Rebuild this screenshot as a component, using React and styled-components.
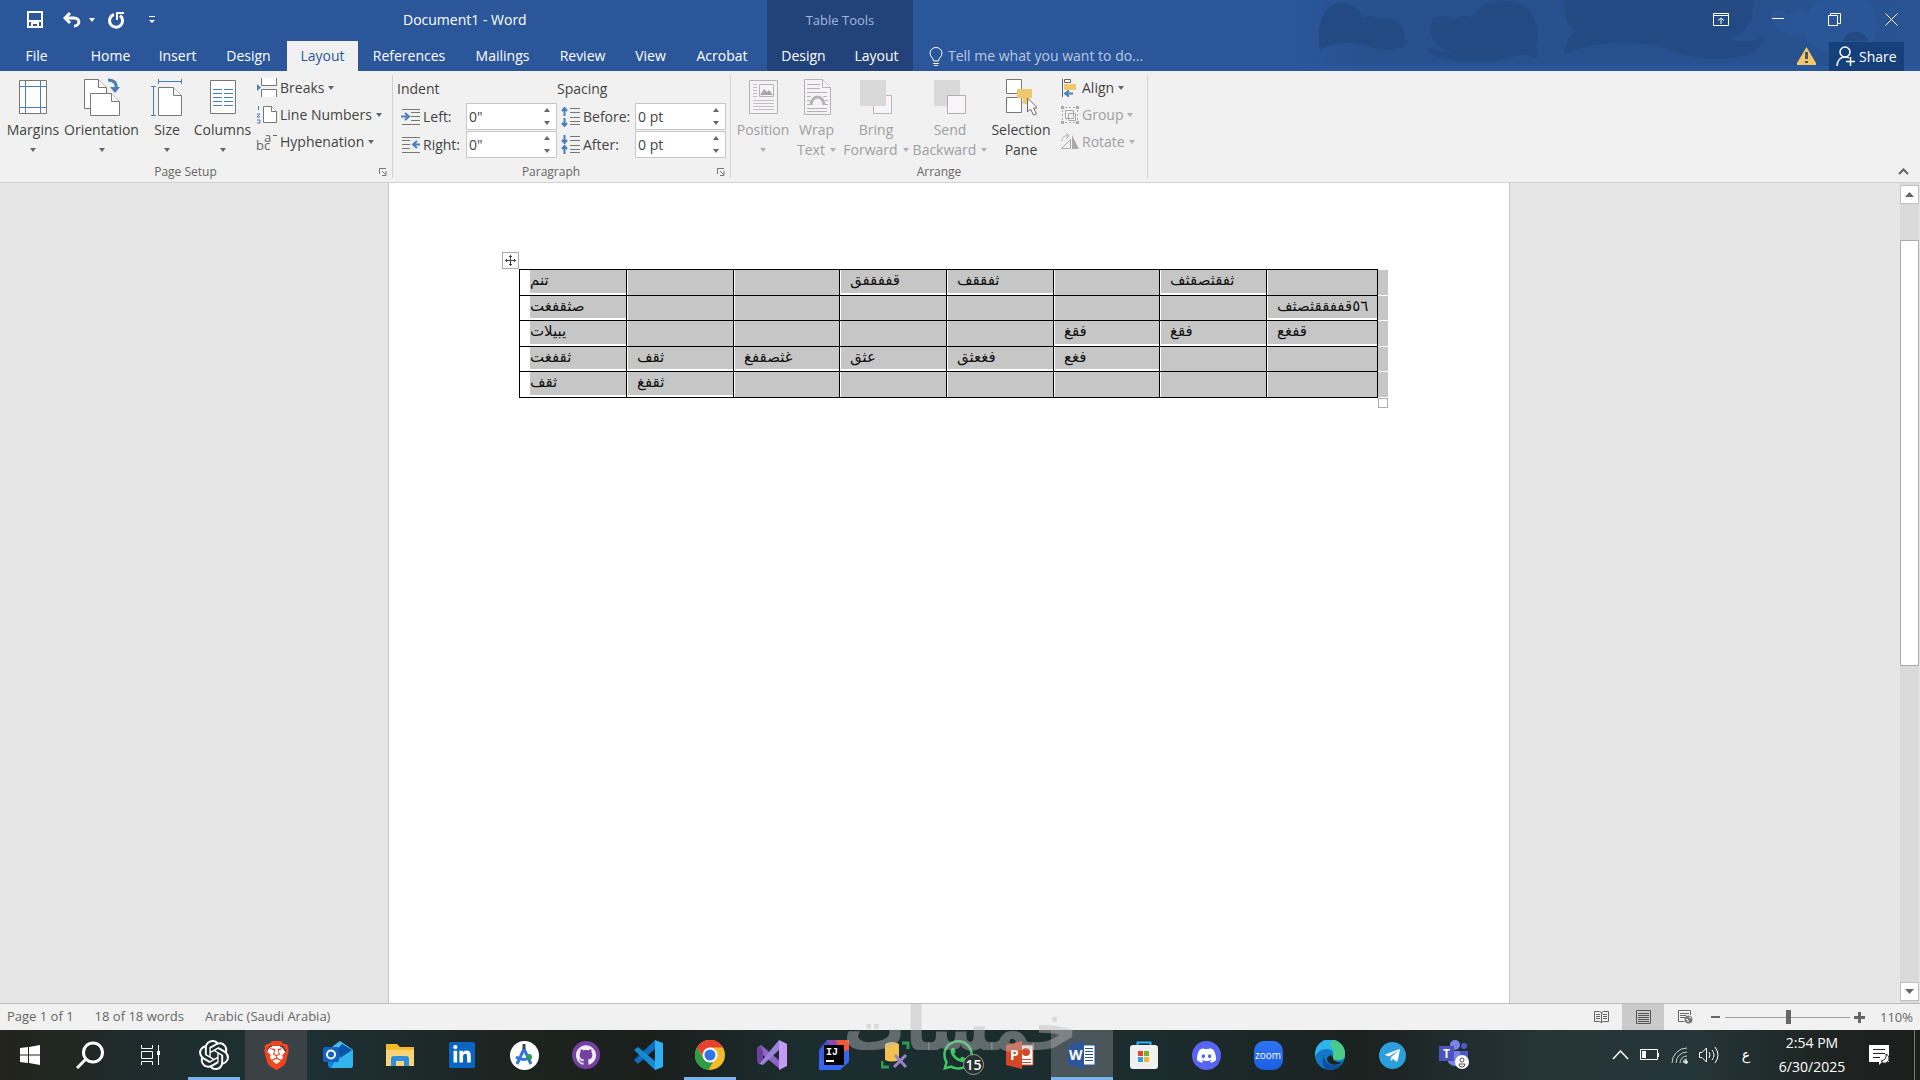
import styled, { createGlobalStyle } from "styled-components";
import { SiOpenai, SiBrave, SiGithub, SiDiscord, SiWhatsapp } from "react-icons/si";
import { FaTelegramPlane, FaLinkedinIn } from "react-icons/fa";

const GlobalStyle = createGlobalStyle`
    * {
      box-sizing: border-box;
    }

    body {
      margin: 0;
      font-family: "Open Sans", "Noto Sans", sans-serif;
      font-size: 14px;
      color: #444;
      background-color: #e6e6e6;
    }

    button, input {
      font: inherit;
      color: inherit;
      margin: 0;
    }

    button {
      border: none;
      padding: 0;
      background: transparent;
    }

    svg {
      display: block;
      flex: none;
    }
`;

const Window = styled.div`
    display: flex;
    flex-direction: column;
    min-height: 100vh;
    overflow: hidden;
`;

/* ---------- title bar and tabs ---------- */

const Header = styled.header`
    position: relative;
    background-color: #2b579a;
    color: #fff;
    display: flex;
    height: 71px;
`;

const HeaderArt = styled.svg`
    position: absolute;
    right: 0;
    top: 0;
`;

const HeaderLeft = styled.div`
    width: 767px;
    display: flex;
    flex-direction: column;
`;

const HeaderRight = styled.div`
    position: relative;
    flex: 1;
    display: flex;
    flex-direction: column;
    justify-content: space-between;
`;

const TitleRow = styled.div`
    height: 41px;
    display: flex;
    align-items: center;
    padding: 0 0 2px 27px;
`;

const QuickAccess = styled.div`
    display: flex;
    align-items: center;
    width: 376px;
    height: 38px;
`;

const QuickButton = styled.button`
    display: flex;
    align-items: center;
    margin-right: ${(props) => props.$after}px;
`;

const DocTitle = styled.h1`
    margin: 0;
    font-size: 14px;
    line-height: 38px;
    font-weight: 400;
    white-space: nowrap;
`;

const TabRow = styled.nav`
    display: flex;
    height: 30px;
`;

const Tab = styled.button`
    width: ${(props) => props.$width}px;
    margin-right: ${(props) => props.$after || 0}px;
    line-height: 30px;
    white-space: nowrap;
    color: ${(props) => (props.$active ? "#2b579a" : "#fff")};
    background-color: ${(props) => (props.$active ? "#f1f1f1" : "transparent")};
`;

const ContextGroup = styled.div`
    width: 146px;
    background-color: #22437a;
    display: flex;
    flex-direction: column;
    justify-content: space-between;
`;

const ContextTitle = styled.div`
    text-align: center;
    line-height: 41px;
    font-size: 13px;
    color: #a3b7da;
`;

const WindowControls = styled.div`
    display: flex;
    justify-content: flex-end;
    height: 38px;
`;

const WindowButton = styled.button`
    width: 57px;
    display: flex;
    align-items: center;
    justify-content: center;
`;

const CommandRow = styled.div`
    display: flex;
    align-items: center;
    height: 30px;
    padding: 0 16px;
`;

const TellMe = styled.input`
    flex: 1;
    margin-left: 5px;
    padding: 0 0 2px;
    border: none;
    outline: none;
    background: transparent;

    &::placeholder {
      color: #b8c8e4;
      opacity: 1;
    }
`;

const ShareButton = styled.button`
    display: flex;
    align-items: center;
    gap: 4px;
    margin-left: 13px;
    width: 75px;
    height: 29px;
    padding-left: 7px;
    background-color: #15407a;
    color: #fff;
`;

/* ---------- ribbon ---------- */

const Ribbon = styled.section`
    display: flex;
    height: 112px;
    background-color: #f1f1f1;
    border-bottom: 1px solid #d2d2d2;
    padding: 4px 11px 4px 0;
`;

const Group = styled.div`
    width: ${(props) => props.$width}px;
    border-right: 1px solid #d2d2d2;
    display: flex;
    flex-direction: column;
`;

const GroupBody = styled.div`
    display: flex;
    flex: 1;
    padding-left: ${(props) => props.$left || 0}px;
`;

const GroupFooter = styled.div`
    display: flex;
    align-items: center;
    height: 12px;
    line-height: 12px;
    font-size: 12px;
    color: #666;

    span {
      flex: 1;
      text-align: center;
    }

    button {
      margin: 0 5px 0 8px;
    }
`;

const BigButton = styled.button`
    width: ${(props) => props.$width}px;
    display: flex;
    flex-direction: column;
    align-items: center;
    padding-top: 3px;
    height: 87px;
    line-height: 20px;
    white-space: nowrap;
    color: ${(props) => (props.$disabled ? "#a0a0a0" : "#444")};

    > svg {
      margin-bottom: 4px;
    }
`;

const LabelLine = styled.span`
    display: flex;
    align-items: center;
    gap: 5px;
    min-height: 20px;
`;

const SmallColumn = styled.div`
    display: flex;
    flex-direction: column;
    margin-left: ${(props) => props.$left}px;
`;

const SmallButton = styled.button`
    display: flex;
    align-items: center;
    height: 27px;
    padding-bottom: 2px;
    white-space: nowrap;
    color: ${(props) => (props.$disabled ? "#a0a0a0" : "#444")};

    > span {
      margin: 0 4px 0 2px;
    }
`;

const FieldColumn = styled.div`
    display: flex;
    flex-direction: column;
    gap: 1px;
    width: ${(props) => props.$width}px;
`;

const FieldTitle = styled.div`
    line-height: 27px;
`;

const Field = styled.div`
    display: flex;
    align-items: center;
    height: 27px;
    padding-left: 4px;

    > svg {
      margin-right: 2px;
    }

    label {
      width: ${(props) => props.$label}px;
      white-space: nowrap;
    }
`;

const Spinner = styled.div`
    display: flex;
    width: 91px;
    height: 27px;
    border: 1px solid #c6c6c6;
    background-color: #fff;

    input {
      width: 70px;
      border: none;
      outline: none;
      padding: 0 2px;
      background: transparent;
    }
`;

const SpinnerArrows = styled.div`
    flex: 1;
    display: flex;
    flex-direction: column;

    button {
      flex: 1;
      display: flex;
      align-items: center;
      justify-content: center;
    }
`;

const CollapseButton = styled.button`
    margin-left: auto;
    align-self: flex-end;
    padding-bottom: 3px;
`;

/* ---------- document ---------- */

const Workspace = styled.main`
    flex: 1;
    display: flex;
    background-color: #e6e6e6;
`;

const Canvas = styled.div`
    flex: 1;
    display: flex;
    justify-content: center;
    padding-right: 2px;
`;

const Page = styled.article`
    width: 1122px;
    background-color: #fff;
    border: solid #c6c6c6;
    border-width: 0 1px;
    padding: 69px 0 0 113px;
`;

const TableFrame = styled.div`
    display: flex;
    flex-direction: column;
    width: 886px;
`;

const MoveHandle = styled.button`
    width: 17px;
    height: 17px;
    border: 1px solid #ababab;
    background-color: #fff;
    display: flex;
    align-items: center;
    justify-content: center;
`;

const ResizeHandle = styled.div`
    width: 10px;
    height: 10px;
    border: 1px solid #ababab;
    background-color: #fff;
    align-self: flex-end;
`;

const DocTable = styled.table`
    margin-left: 17px;
    border-spacing: 0;
    table-layout: fixed;
    width: 869px;

    tr:first-child td {
      border-top: 1px solid #000;
    }

    td:first-child {
      border-left: 1px solid #000;
      box-shadow: inset 10px 0 #fff, inset 0 -2px #fff;
    }
`;

const Row = styled.tr`
    height: ${(props) => props.$height}px;
`;

const Cell = styled.td`
    padding: 0 0 0 10px;
    border-right: 1px solid #000;
    border-bottom: 1px solid #000;
    background-color: #c6c6c6;
    box-shadow: inset 1px 0 #fff, inset 0 ${(props) => (props.$filled ? "-2px" : "0")} #fff;
    color: #111;
    font-family: "DejaVu Sans", sans-serif;
    font-size: 15px;
    line-height: 20px;
    vertical-align: top;
    white-space: nowrap;
`;

const RowMark = styled.td`
    padding: 0;
    background-color: #c6c6c6;
    border-bottom: 1px solid #fff;

    tr:first-child > && {
      border-top-color: #fff;
    }
`;

const ScrollBar = styled.div`
    display: flex;
    flex-direction: column;
    width: 19px;
    margin-right: 1px;
    padding: 2px 0;
    background-color: #dadada;
`;

const ScrollButton = styled.button`
    height: 19px;
    border: 1px solid #c0c0c0;
    background-color: #fff;
    display: flex;
    align-items: center;
    justify-content: center;
`;

const ScrollSpace = styled.div`
    flex: ${(props) => props.$grow};
`;

const ScrollThumb = styled.div`
    flex: 425;
    border: 1px solid #ababab;
    background-color: #fff;
`;

/* ---------- status bar ---------- */

const StatusBar = styled.footer`
    display: flex;
    align-items: center;
    height: 27px;
    padding: 0 7px;
    border-top: 1px solid #bdbdbd;
    background-color: #f1f1f1;
    color: #666;
    font-size: 13px;

    > span {
      line-height: 24px;
      padding-bottom: 2px;
      margin-right: 21px;
    }
`;

const ViewControls = styled.div`
    display: flex;
    align-items: center;
    margin-left: auto;
`;

const ViewButton = styled.button`
    width: 42px;
    height: 26px;
    display: flex;
    align-items: center;
    justify-content: center;
    background-color: ${(props) => (props.$active ? "#cacaca" : "transparent")};
`;

const ZoomSlider = styled.input`
    appearance: none;
    width: 125px;
    height: 15px;
    margin: 0 4px;
    background: linear-gradient(#a0a0a0, #a0a0a0) center / 100% 1px no-repeat;

    &::-webkit-slider-thumb {
      appearance: none;
      width: 5px;
      height: 14px;
      background-color: #666;
    }
`;

const ZoomValue = styled.output`
    width: 48px;
    text-align: right;
`;

/* ---------- taskbar ---------- */

const Taskbar = styled.nav`
    display: flex;
    height: 50px;
    color: #fff;
    background: linear-gradient(
      90deg,
      #23241b 0%,
      #1e2c2e 8%,
      #1e3034 16%,
      #1c2420 27%,
      #1a1f1c 34%,
      #1c2d30 42%,
      #1b2c2e 60%,
      #1b2220 71%,
      #253437 80%,
      #25363a 88%,
      #1e2423 95%,
      #1c1e1c 100%
    );
`;

const TaskButton = styled.button`
    position: relative;
    width: ${(props) => props.$width || 62}px;
    display: flex;
    align-items: center;
    justify-content: center;
    border: solid transparent;
    border-width: 0 ${(props) => (props.$active ? 0 : 5)}px;
    background: ${(props) =>
      props.$open ? "linear-gradient(#79b4ec, #79b4ec) bottom / 100% 3px no-repeat" : "none"};
    background-color: ${(props) => (props.$active ? props.$active : "transparent")};
    background-clip: padding-box;
`;

const Disc = styled.span`
    width: ${(props) => props.$size || 29}px;
    height: ${(props) => props.$size || 29}px;
    border-radius: ${(props) => props.$radius || "50%"};
    display: flex;
    align-items: center;
    justify-content: center;
    background: ${(props) => props.$fill};
    font-size: 10px;
    color: #fff;
`;

const Badge = styled.span`
    position: absolute;
    left: 31px;
    top: 24px;
    width: 21px;
    height: 21px;
    border: 1px solid #999;
    border-radius: 50%;
    background-color: #26312f;
    font-size: 14px;
    font-weight: 600;
    line-height: 19px;
`;

const Tray = styled.div`
    display: flex;
    align-items: center;
    margin-left: auto;
    padding-right: 5px;

    > svg {
      margin-right: 11px;
    }
`;

const Language = styled.span`
    width: 16px;
    margin: 0 16px 0 7px;
    font: 14px "DejaVu Sans", sans-serif;
    text-align: center;
`;

const Clock = styled.time`
    width: 84px;
    line-height: 24px;
    text-align: center;
    margin-right: 15px;
`;

const Notifications = styled.button`
    padding-right: 24px;
    height: 50px;
    border-right: 1px solid #777;
    display: flex;
    align-items: center;
`;

const Watermark = styled.div`
    position: absolute;
    left: 50%;
    bottom: 20px;
    width: 230px;
    margin-left: -112px;
    text-align: center;
    direction: rtl;
    pointer-events: none;
    font: bold 62px/62px "DejaVu Sans", sans-serif;
    color: rgba(186, 186, 186, 0.44);
`;

const Caret = ({ up, color = "#666", size = 6 }) => (
  <svg width={size} height={size === 6 ? 4 : 5} viewBox="0 0 6 4" preserveAspectRatio="none">
    <path d={up ? "M0 4h6L3 0z" : "M0 0h6L3 4z"} fill={color} />
  </svg>
);

const Launcher = () => (
  <svg width="8" height="8" viewBox="0 0 8 8" fill="none" stroke="#777">
    <path d="M.5 6V.5H7M3 3l3.500 3.500M7 3v4.500H3" />
  </svg>
);

const PageShape = ({ x, y, w = 23, h = 28, fold = 8, stroke = "#777", fill = "#fff" }) => (
  <g fill={fill} stroke={stroke}>
    <path d={`M${x} ${y}h${w - fold}l${fold} ${fold}v${h - fold}h-${w}z`} />
    <path d={`M${x + w - fold} ${y}v${fold}h${fold}`} />
  </g>
);

const bigIcons = {
  margins: (
    <svg width="36" height="38" fill="none">
      <path d="M4.500 2.500h27v33h-27z" fill="#fff" stroke="#777" />
      <path d="M10.500 3v32M25.500 3v32M5 8.500h26M5 29.500h26" stroke="#4a7ebb" />
    </svg>
  ),
  orientation: (
    <svg width="36" height="38" fill="none">
      <PageShape x={0.5} y={1.5} w={22} h={29} />
      <PageShape x={6.5} y={15.5} w={29} h={22} />
      <path d="M24 2c6 0 9 3 8 9" stroke="#4a7ebb" strokeWidth="3" />
      <path d="M26 9l5 6 5-6z" fill="#4a7ebb" />
    </svg>
  ),
  size: (
    <svg width="32" height="38" fill="none">
      <PageShape x={7.5} y={9.5} w={23} h={28} />
      <path d="M7.500 1v5M30.500 1v5M8 3.500h22M0 8.500h5M0 37.500h5M2.500 9v28" stroke="#4a7ebb" />
    </svg>
  ),
  columns: (
    <svg width="28" height="38" fill="none">
      <path d="M1.500 2.500h25v33h-25z" fill="#fff" stroke="#777" />
      <path d="M4 11.500h9M4 15.500h9M4 19.500h9M4 23.500h9M4 27.500h9M15 11.500h9M15 15.500h9M15 19.500h9M15 23.500h9M15 27.500h9" stroke="#4a7ebb" />
    </svg>
  ),
  position: (
    <svg width="30" height="38" fill="none">
      <path d="M1.500 2.500h28v33h-28z" fill="#f5f3f6" stroke="#b4b4b4" />
      <path d="M11.500 6.500h14v12h-14z" stroke="#b4b4b4" />
      <path d="M12 17l4-6 3 3 2-2 4 5z" fill="#a8a8a8" />
      <path d="M5 6.500h4M5 9.500h4M5 12.500h4M5 15.500h4M5 18.500h4M5 22.500h21M5 25.500h21M5 28.500h21M5 31.500h21" stroke="#c0c0c0" />
    </svg>
  ),
  wrap: (
    <svg width="28" height="38" fill="none">
      <PageShape x={1.5} y={1.5} w={26} h={35} stroke="#b4b4b4" fill="#f5f3f6" />
      <path d="M4 6.500h13M4 10.500h13M4 14.500h20M4 18.500h4M20 18.500h4M4 22.500h3M22 22.500h3M4 26.500h3M22 26.500h3M4 30.500h20M4 33.500h20" stroke="#b4b4b4" />
      <path d="M8 27a6.500 8 0 0 1 13 0" stroke="#b4b4b4" strokeWidth="3" />
    </svg>
  ),
  forward: (
    <svg width="34" height="38" fill="none">
      <path d="M14.500 17.500h18v18h-18z" fill="#f8f4f8" stroke="#b8b8b8" />
      <path d="M1 2h26v26H1z" fill="#d9d9d9" />
    </svg>
  ),
  backward: (
    <svg width="34" height="38" fill="none">
      <path d="M1 2h26v26H1z" fill="#d9d9d9" />
      <path d="M14.500 17.500h18v18h-18z" fill="#f8f4f8" stroke="#b0b0b0" />
    </svg>
  ),
  selection: (
    <svg width="32" height="38" fill="none">
      <path d="M1.500 1.500h15v14h-15zM1.500 19.500h15v15h-15z" fill="#fff" stroke="#777" />
      <path d="M12 11h15v9h-5v6h-4v-6h-6z" fill="#f0c76c" />
      <path d="M22.500 20v14l3-3 3 6 3-1-3-6h4z" fill="#fff" stroke="#666" />
    </svg>
  ),
};

const smallIcons = {
  breaks: (
    <svg width="22" height="20" fill="none" stroke="#777">
      <path d="M5.500 0v7.500h15V0M5.500 19v-7.500h15V19" fill="#fff" />
      <path d="M1 6v7l4-3.500z" fill="#4a7ebb" stroke="none" />
    </svg>
  ),
  lines: (
    <svg width="22" height="20" fill="none">
      <PageShape x={7.5} y={1.5} w={13} h={16} fold={5} />
      <path d="M2.500 1v4M1 9h3l-3 3h3M1 15h3v3H1" stroke="#4a7ebb" />
    </svg>
  ),
  hyphen: (
    <svg width="22" height="24" fontSize="13" fill="#666">
      <text x="0" y="20">bc</text>
      <text x="8" y="12">a</text>
      <path d="M17 5h4v1h-4z" />
    </svg>
  ),
  align: (
    <svg width="20" height="20" fill="none">
      <path d="M2.500 1v18" stroke="#666" />
      <path d="M4.500 1.500h6v3h-6z" fill="#fff" stroke="#666" />
      <path d="M4 6h12v6H4z" fill="#f0c76c" />
      <path d="M13 15.500H6M9 12.500l-4 3 4 3" stroke="#4a7ebb" strokeWidth="2" />
    </svg>
  ),
  group: (
    <svg width="20" height="20" fill="none" stroke="#aaa">
      <path d="M5.500 5.500h8v8h-8zM8.500 8.500h7v7h-7z" />
      <path d="M1 1h3v3H1zM16 1h3v3h-3zM1 16h3v3H1zM16 16h3v3h-3z" fill="#aaa" stroke="none" />
      <path d="M2.500 5v11M5 2.500h10M17.500 5v11M5 17.500h10" strokeDasharray="2 2" />
    </svg>
  ),
  rotate: (
    <svg width="20" height="20" fill="none" stroke="#aaa">
      <path d="M1.500 16.500h9v-9z" />
      <path d="M12 17V3l7 14z" fill="#aaa" stroke="none" />
      <path d="M2 9c0-4 3-6 6-5M6 1l3 3-3 3" />
    </svg>
  ),
};

const IndentIcon = ({ right }) => (
  <svg width="20" height="18" fill="none">
    <path
      d={right ? "M1 1.500h18M1 4.500h8M1 8.500h8M1 12.500h8M1 16.500h18" : "M1 1.500h18M10 4.500h9M10 8.500h9M10 12.500h9M1 16.500h18"}
      stroke="#777"
    />
    <path d={right ? "M19 8.500h-6M16 5l-4 3.500 4 3.500" : "M0 8.500h6M4 5l4 3.500L4 12"} stroke="#4a7ebb" strokeWidth="2" />
  </svg>
);

const SpacingIcon = ({ after }) => (
  <svg width="20" height="20" fill="none">
    <path d="M9 1.500h10M9 5.500h10M9 10.500h10M9 14.500h10M9 17.500h10" stroke="#777" />
    <path
      d={after ? "M3.500 0v7M1 5l2.500 3L6 5M3.500 19v-7M1 14l2.500-3L6 14" : "M3.500 9V2M1 4l2.500-3L6 4M3.500 11v7M1 16l2.500 3L6 16"}
      stroke="#4a7ebb"
      strokeWidth="2"
    />
  </svg>
);

const tabs = [
  { name: "File", width: 73, after: 3 },
  { name: "Home", width: 69 },
  { name: "Insert", width: 65 },
  { name: "Design", width: 77 },
  { name: "Layout", width: 71, active: true },
  { name: "References", width: 102 },
  { name: "Mailings", width: 85 },
  { name: "Review", width: 75 },
  { name: "View", width: 61 },
  { name: "Acrobat", width: 82 },
];

const rows = [
  { height: 27, cells: ["تنم", "", "", "قففقفق", "ثفققف", "", "ثفقثصقثف", ""] },
  { height: 25, cells: ["صثقفغت", "", "", "", "", "", "", "٥٦قففققثصثف"] },
  { height: 26, cells: ["يبيلات", "", "", "", "", "فقغ", "فقغ", "قفغع"] },
  { height: 25, cells: ["ثقفغت", "ثقف", "غثصقفغ", "عثق", "فغعثق", "فغع", "", ""] },
  { height: 26, cells: ["ثقف", "ثقفغ", "", "", "", "", "", ""] },
];

const Big = ({ icon, width, lines, caret, disabled }) => (
  <BigButton $width={width} $disabled={disabled}>
    {bigIcons[icon]}
    <LabelLine>{lines[0]}</LabelLine>
    <LabelLine>
      {lines[1]}
      {caret && <Caret color={disabled ? "#b0b0b0" : "#666"} />}
    </LabelLine>
  </BigButton>
);

const Small = ({ icon, label, disabled }) => (
  <SmallButton $disabled={disabled}>
    {smallIcons[icon]}
    <span>{label}</span>
    <Caret color={disabled ? "#b0b0b0" : "#666"} />
  </SmallButton>
);

const NumberField = ({ id, icon, label, labelWidth, value }) => (
  <Field $label={labelWidth}>
    {icon}
    <label htmlFor={id}>{label}</label>
    <Spinner>
      <input id={id} defaultValue={value} />
      <SpinnerArrows>
        <button aria-label="Increase"><Caret up /></button>
        <button aria-label="Decrease"><Caret /></button>
      </SpinnerArrows>
    </Spinner>
  </Field>
);

const TitleBar = () => (
  <Header>
    <HeaderArt width="640" height="71" fill="#244a83">
      <defs>
        <linearGradient id="haze">
          <stop offset="0" stopColor="#27508e" stopOpacity="0" />
          <stop offset="0.150" stopColor="#27508e" />
          <stop offset="0.750" stopColor="#27508e" />
          <stop offset="1" stopColor="#27508e" stopOpacity="0.500" />
        </linearGradient>
      </defs>
      <path d="M0 0h640v65H0z" fill="url(#haze)" />
      <path d="M490 12c8-6 16 0 18 4 6-8 16-10 20-2C530 4 540 0 550 0h36c14 14 14 40 0 50-20 12-60-2-62-16-18 4-34-8-34-22z" fill="#2b579a" opacity=".7" />
      <path d="M40 50c-2-14-2-26 4-36C52-2 78-2 82 18c6-4 14-2 16 2 20-4 30 8 26 18 0 4-4 6-8 6l12-4c-2 10-20 12-34 8-18-8-40-6-54 2z" />
      <path d="M148 48c12 6 22 4 28 4-22-2-28-16-24-32 6-6 18-4 22 0 4-4 14-6 18-2C196 6 212 0 228 1c24 2 34 24 28 46 2 6 1 10 1 13-8-6-14-6-22-4-20 10-84 8-87-8z" />
      <path d="M284 0h189c2 18-6 34-26 40 14 2 26 2 36-4 4 14-24 24-46 23-30 0-48-12-66-14-30-4-64-2-87 9 2-10 4-18 11-22-8-8-12-20-11-32z" />
      <path d="M563 41c4-12 20-12 26 0z" />
    </HeaderArt>
    <HeaderLeft>
      <TitleRow>
        <QuickAccess>
          <QuickButton aria-label="Save" $after={20}>
            <svg width="16" height="17" fill="none" stroke="#fff" strokeWidth="2">
              <path d="M1 1h14v15H1zM1 10h14" />
              <path d="M5 16v-4h6v4" />
            </svg>
          </QuickButton>
          <QuickButton aria-label="Undo" $after={8}>
            <svg width="18" height="16" fill="none" stroke="#fff" strokeWidth="3">
              <path d="M2 6h9c7 0 6 8 0 8" />
              <path d="M7 1L2 6l5 5" />
            </svg>
          </QuickButton>
          <QuickButton aria-label="Undo history" $after={13}><Caret color="#fff" /></QuickButton>
          <QuickButton aria-label="Repeat" $after={24}>
            <svg width="17" height="18" fill="none" stroke="#fff" strokeWidth="3">
              <path d="M6 3.500a6.500 6.500 0 1 0 6 1" />
              <path d="M9 9V2h7" strokeWidth="2" />
            </svg>
          </QuickButton>
          <QuickButton aria-label="Customize Quick Access Toolbar" $after={0}>
            <svg width="6" height="8" fill="#fff"><path d="M0 0h6v1H0zM0 4h6L3 7z" /></svg>
          </QuickButton>
        </QuickAccess>
        <DocTitle>Document1 - Word</DocTitle>
      </TitleRow>
      <TabRow>
        {tabs.map((tab) => (
          <Tab key={tab.name} $width={tab.width} $after={tab.after} $active={tab.active}>
            {tab.name}
          </Tab>
        ))}
      </TabRow>
    </HeaderLeft>
    <ContextGroup>
      <ContextTitle>Table Tools</ContextTitle>
      <TabRow>
        <Tab $width={73}>Design</Tab>
        <Tab $width={73}>Layout</Tab>
      </TabRow>
    </ContextGroup>
    <HeaderRight>
      <WindowControls>
        <WindowButton aria-label="Ribbon display options">
          <svg width="16" height="13" fill="none" stroke="#fff">
            <path d="M.5.5h15v12H.5zM1 2.500h14M8 11V5M5 7.500L8 5l3 2.500" />
          </svg>
        </WindowButton>
        <WindowButton aria-label="Minimize">
          <svg width="12" height="2" fill="#fff"><path d="M0 0h12v1H0z" /></svg>
        </WindowButton>
        <WindowButton aria-label="Restore">
          <svg width="13" height="13" fill="none" stroke="#fff">
            <path d="M.5 2.500h9v10h-9zM2.500 2V.5h10v10H10" />
          </svg>
        </WindowButton>
        <WindowButton aria-label="Close">
          <svg width="13" height="13" fill="none" stroke="#fff"><path d="M.5.5l12 12M12.500.5l-12 12" /></svg>
        </WindowButton>
      </WindowControls>
      <CommandRow>
        <svg width="14" height="19" fill="none" stroke="#fff">
          <path d="M4.500 14c0-3-3.500-4-3.500-8a6 5.500 0 0 1 12 0c0 4-3.500 5-3.500 8zM4 16.500h6M5 18.500h4" />
        </svg>
        <TellMe aria-label="Tell me" placeholder="Tell me what you want to do..." />
        <svg width="19" height="18">
          <path d="M9.500 0L19 16v2H0v-2z" fill="#f0c76c" />
          <path d="M8 5h3v7H8zM8 14h3v2H8z" fill="#555" />
        </svg>
        <ShareButton>
          <svg width="19" height="21" fill="none" stroke="#fff" strokeWidth="1.500">
            <circle cx="9" cy="6" r="5" />
            <path d="M1 20c0-6 4-9 8-9 2 0 3 0 4 1M14.500 11v9M10 15.500h9" />
          </svg>
          Share
        </ShareButton>
      </CommandRow>
    </HeaderRight>
  </Header>
);

const RibbonBar = () => (
  <Ribbon>
    <Group $width={393}>
      <GroupBody $left={4}>
        <Big icon="margins" width={58} lines={["Margins"]} caret />
        <Big icon="orientation" width={79} lines={["Orientation"]} caret />
        <Big icon="size" width={52} lines={["Size"]} caret />
        <Big icon="columns" width={59} lines={["Columns"]} caret />
        <SmallColumn $left={4}>
          <Small icon="breaks" label="Breaks" />
          <Small icon="lines" label="Line Numbers" />
          <Small icon="hyphen" label="Hyphenation" />
        </SmallColumn>
      </GroupBody>
      <GroupFooter>
        <span>Page Setup</span>
        <button aria-label="Page Setup dialog"><Launcher /></button>
      </GroupFooter>
    </Group>
    <Group $width={338}>
      <GroupBody $left={4}>
        <FieldColumn $width={160}>
          <FieldTitle>Indent</FieldTitle>
          <NumberField id="indent-left" icon={<IndentIcon />} label="Left:" labelWidth={43} value={'0"'} />
          <NumberField id="indent-right" icon={<IndentIcon right />} label="Right:" labelWidth={43} value={'0"'} />
        </FieldColumn>
        <FieldColumn $width={170}>
          <FieldTitle>Spacing</FieldTitle>
          <NumberField id="space-before" icon={<SpacingIcon />} label="Before:" labelWidth={52} value="0 pt" />
          <NumberField id="space-after" icon={<SpacingIcon after />} label="After:" labelWidth={52} value="0 pt" />
        </FieldColumn>
      </GroupBody>
      <GroupFooter>
        <span>Paragraph</span>
        <button aria-label="Paragraph dialog"><Launcher /></button>
      </GroupFooter>
    </Group>
    <Group $width={417}>
      <GroupBody>
        <Big icon="position" width={64} lines={["Position"]} caret disabled />
        <Big icon="wrap" width={43} lines={["Wrap", "Text"]} caret disabled />
        <Big icon="forward" width={76} lines={["Bring", "Forward"]} caret disabled />
        <Big icon="backward" width={72} lines={["Send", "Backward"]} caret disabled />
        <Big icon="selection" width={70} lines={["Selection", "Pane"]} />
        <SmallColumn $left={4}>
          <Small icon="align" label="Align" />
          <Small icon="group" label="Group" disabled />
          <Small icon="rotate" label="Rotate" disabled />
        </SmallColumn>
      </GroupBody>
      <GroupFooter>
        <span>Arrange</span>
      </GroupFooter>
    </Group>
    <CollapseButton aria-label="Collapse the ribbon">
      <svg width="11" height="7" fill="none" stroke="#666" strokeWidth="2"><path d="M1 6l4.500-4.500L10 6" /></svg>
    </CollapseButton>
  </Ribbon>
);

const DocumentArea = () => (
  <Workspace>
    <Canvas>
      <Page>
        <TableFrame>
          <MoveHandle aria-label="Move table">
            <svg width="11" height="11" fill="none" stroke="#444">
              <path d="M5.500 0v11M0 5.500h11M4 1.500h3M4 9.500h3M1.500 4v3M9.500 4v3" />
            </svg>
          </MoveHandle>
          <DocTable>
            <colgroup>
              {[108, 107, 106, 107, 107, 106, 107, 111, 10].map((width, i) => (
                <col key={i} width={width} />
              ))}
            </colgroup>
            <tbody>
              {rows.map((row, i) => (
                <Row key={i} $height={row.height}>
                  {row.cells.map((text, j) => (
                    <Cell key={j} $filled={text !== ""}>{text}</Cell>
                  ))}
                  <RowMark />
                </Row>
              ))}
            </tbody>
          </DocTable>
          <ResizeHandle />
        </TableFrame>
      </Page>
    </Canvas>
    <ScrollBar>
      <ScrollButton aria-label="Scroll up"><Caret up size={9} /></ScrollButton>
      <ScrollSpace $grow={36} />
      <ScrollThumb />
      <ScrollSpace $grow={317} />
      <ScrollButton aria-label="Scroll down"><Caret size={9} /></ScrollButton>
    </ScrollBar>
  </Workspace>
);

const Status = () => (
  <StatusBar>
    <span>Page 1 of 1</span>
    <span>18 of 18 words</span>
    <span>Arabic (Saudi Arabia)</span>
    <ViewControls>
      <ViewButton aria-label="Read mode">
        <svg width="15" height="14" fill="none" stroke="#666">
          <path d="M.5 1.500h5l2 1 2-1h5v10h-5l-2 1-2-1h-5zM7.500 2v11M2 4.500h4M2 6.500h4M2 8.500h4M9 4.500h4M9 6.500h4M9 8.500h4" />
        </svg>
      </ViewButton>
      <ViewButton $active aria-label="Print layout">
        <svg width="15" height="14" fill="none" stroke="#555">
          <path d="M.5.5h14v13H.5zM2 3.500h11M2 5.500h11M2 7.500h11M2 9.500h11M2 11.500h11" />
        </svg>
      </ViewButton>
      <ViewButton aria-label="Web layout">
        <svg width="15" height="14" fill="none" stroke="#666">
          <path d="M6 11.500H.5V.5h12V5M2 3.500h9M2 5.500h6M2 7.500h5" />
          <circle cx="10.500" cy="9.500" r="4" fill="#777" stroke="none" />
          <path d="M8 9l2 1v2M11 7l2 1" stroke="#fff" />
        </svg>
      </ViewButton>
      <svg width="15" height="10" fill="#666"><path d="M5 4h9v2H5z" /></svg>
      <ZoomSlider type="range" min="10" max="210" defaultValue="112" aria-label="Zoom" />
      <svg width="11" height="11" fill="#666"><path d="M0 4h11v3H0zM4 0h3v11H4z" /></svg>
      <ZoomValue>110%</ZoomValue>
    </ViewControls>
  </StatusBar>
);

const apps = [
  {
    name: "Start",
    width: 60,
    icon: (
      <svg width="20" height="20" fill="#fff">
        <path d="M0 3l8-1v7.500H0zM9 2l11-2v9.500H9zM0 10.500h8V18l-8-1zM9 10.500h11V20L9 18z" />
      </svg>
    ),
  },
  {
    name: "Search",
    width: 60,
    icon: (
      <svg width="28" height="28" fill="none" stroke="#fff" strokeWidth="3">
        <circle cx="17" cy="11.500" r="9.500" />
        <path d="M10 18l-9 9" />
      </svg>
    ),
  },
  {
    name: "Task View",
    width: 63,
    icon: (
      <svg width="23" height="20" fill="none" stroke="#fff">
        <path d="M1.500 0v3.500h11V0M1.500 20v-3.500h11V20M1.500 6.500h11v7h-11zM18.500 0v20" />
        <path d="M17 6h3v4h-3z" fill="#fff" stroke="none" />
      </svg>
    ),
  },
  { name: "ChatGPT", open: true, icon: <SiOpenai size={30} /> },
  {
    name: "Brave",
    active: "#3a4246",
    icon: <Disc $size={26} $fill="radial-gradient(#fff 50%, transparent 52%)"><SiBrave size={29} color="#f1451f" /></Disc>,
  },
  {
    name: "Outlook",
    icon: (
      <svg width="30" height="28">
        <path d="M5 9L17 0l13 9v15q0 3-3 3H8q-3 0-3-3z" fill="#1482d8" />
        <path d="M9 6l8-6 13 9-13 8z" fill="#4bb8f0" />
        <path d="M12 20L30 9v15q0 3-3 3H8z" fill="#31b4ee" />
        <path d="M13 10l6-7 10 6-12 8z" fill="#0b55a5" />
        <rect y="6" width="16" height="15" rx="2" fill="#0f62bd" />
        <circle cx="8" cy="13.500" r="4" fill="none" stroke="#fff" strokeWidth="2" />
      </svg>
    ),
  },
  {
    name: "File Explorer",
    icon: (
      <svg width="28" height="24">
        <path d="M0 1h11l3 3h14v19H0z" fill="#f5b92c" />
        <path d="M0 7h28v16H0z" fill="#f8d377" />
        <path d="M5 23v-7q0-3 3-3h12q3 0 3 3v7h-5v-5h-8v5z" fill="#2f8fdc" />
      </svg>
    ),
  },
  { name: "LinkedIn", icon: <Disc $size={26} $radius="2px" $fill="#0a66c2"><FaLinkedinIn size={20} /></Disc> },
  {
    name: "Android Studio",
    icon: (
      <Disc $fill="#fff">
        <svg width="20" height="24" fill="none" stroke="#3072e8" strokeWidth="3">
          <path d="M3 21L10 6l7 15M2 14q8 5 15 0" />
          <circle cx="15" cy="14" r="3" fill="#2f9c55" stroke="none" />
          <path d="M10 1v5" stroke="#444" />
        </svg>
      </Disc>
    ),
  },
  { name: "GitHub Desktop", icon: <Disc $size={28} $fill="#7540a0"><SiGithub size={20} color="#f0ecf8" /></Disc> },
  {
    name: "Visual Studio Code",
    icon: (
      <svg width="30" height="30">
        <path d="M1 20L22 0v9L5 24z" fill="#0f6bbd" />
        <path d="M1 10l4-3 17 14v9z" fill="#1688d4" />
        <path d="M22 0l8 3v24l-8 3z" fill="#2fb0f0" />
      </svg>
    ),
  },
  {
    name: "Chrome",
    open: true,
    icon: (
      <svg width="30" height="30">
        <circle cx="15" cy="15" r="15" fill="#f3bb2c" />
        <path d="M2 7.500A15 15 0 0 1 28 7.500H15L9 18z" fill="#e8422f" />
        <path d="M2 7.500L9 19l9 3-4.500 8A15 15 0 0 1 2 7.500z" fill="#2f9c48" />
        <circle cx="15" cy="15" r="7.500" fill="#fff" />
        <circle cx="15" cy="15" r="5.500" fill="#2f74e8" />
      </svg>
    ),
  },
  {
    name: "Visual Studio",
    icon: (
      <svg width="30" height="30">
        <path d="M0 8l4-3 20 17v8L0 10z" fill="#8a65c4" />
        <path d="M0 8l4-2 2 6v7l-4 5-2-2z" fill="#6e3f9d" />
        <path d="M2 24L22 0v10L6 25z" fill="#9a82d8" />
        <path d="M22 0l8 4v22l-8 4z" fill="#c69af4" />
      </svg>
    ),
  },
  {
    name: "IntelliJ IDEA",
    icon: (
      <svg width="30" height="30">
        <path d="M0 10L8 0h14L8 29H0z" fill="#3b5be0" />
        <path d="M8 0h22v12L18 20z" fill="#8c4ab0" />
        <path d="M17 0h13v10l-8 4z" fill="#ee5a38" />
        <path d="M30 10v12l-9 8H0V20z" fill="#3468ee" />
        <path d="M5 5h20v20H5z" fill="#000" />
        <text x="7" y="15" fill="#fff" fontSize="10" fontWeight="700" fontFamily="Liberation Mono, monospace">IJ</text>
        <path d="M7 20h8v2H7z" fill="#fff" />
      </svg>
    ),
  },
  {
    name: "SQL Server Tools",
    icon: (
      <svg width="30" height="28" fill="none">
        <path d="M4 3q7-4 14 0v16q-7 3-14 0z" fill="#f2c14e" />
        <path d="M21 2h6v6M1 20v6h7" stroke="#2f9c55" strokeWidth="3" />
        <path d="M14 14l11 12M25 14L13 26" stroke="#9a82c8" strokeWidth="3" />
      </svg>
    ),
  },
  { name: "WhatsApp", icon: <><SiWhatsapp size={30} color="#3cc760" /><Badge>15</Badge></> },
  {
    name: "PowerPoint",
    icon: (
      <svg width="28" height="28">
        <path d="M12 4h15v20H12z" fill="#fff" stroke="#d34727" />
        <circle cx="20" cy="11" r="4" fill="#d34727" />
        <path d="M16 18h9v1h-9zM16 21h9v1h-9z" fill="#d34727" />
        <path d="M0 4l16-4v28L0 24z" fill="#d34727" />
        <text x="4" y="19" fill="#fff" fontSize="14" fontWeight="700">P</text>
      </svg>
    ),
  },
  {
    name: "Word",
    open: true,
    active: "#4b565b",
    icon: (
      <svg width="28" height="28">
        <path d="M12 4h15v20H12z" fill="#fff" stroke="#2b579a" />
        <path d="M17 7h8v1h-8zM17 10h8v1h-8zM17 13h8v1h-8zM17 16h8v1h-8zM17 19h8v1h-8z" fill="#2b579a" />
        <path d="M0 4l16-4v28L0 24z" fill="#2b579a" />
        <text x="1" y="19" fill="#fff" fontSize="14" fontWeight="700">W</text>
      </svg>
    ),
  },
  {
    name: "Microsoft Store",
    icon: (
      <svg width="30" height="30">
        <path d="M8.500 7V2.500h13V7" fill="none" stroke="#31b4ee" strokeWidth="2" />
        <rect x="1" y="5" width="28" height="24" rx="3" fill="#f0f0f0" />
        <path d="M9 11h5v5H9z" fill="#e8422f" />
        <path d="M15 11h5v5h-5z" fill="#6cb52d" />
        <path d="M9 17h5v5H9z" fill="#2f9fe0" />
        <path d="M15 17h5v5h-5z" fill="#f3bb2c" />
      </svg>
    ),
  },
  { name: "Discord", icon: <Disc $fill="#5865f2"><SiDiscord size={19} /></Disc> },
  { name: "Zoom", icon: <Disc $radius="10px" $fill="linear-gradient(#2f74f5, #1a5fe0)">zoom</Disc> },
  {
    name: "Edge",
    icon: (
      <svg width="30" height="30">
        <circle cx="15" cy="15" r="15" fill="#1378c8" />
        <path d="M0 14A15 15 0 0 1 30 14q0 7-8 6-5 0-4-4 1-7-6-7-9 0-12 8z" fill="#31b4ee" />
        <path d="M18 0q12 3 12 14 0 7-8 6-5 0-4-4 3-9-4-10z" fill="#48cc88" />
        <path d="M9 17q2 11 18 7-6 7-15 6-7-5-3-13z" fill="#0f4f9c" />
        <path d="M18 17q-1 6 10 5-8 5-14 1-4-4 0-7 2-2 4 1z" fill="#1b2422" />
      </svg>
    ),
  },
  { name: "Telegram", icon: <Disc $size={27} $fill="#2a9fdb"><FaTelegramPlane size={17} /></Disc> },
  {
    name: "Teams",
    icon: (
      <svg width="30" height="30">
        <circle cx="16" cy="5" r="5" fill="#7b83eb" />
        <circle cx="25" cy="6" r="3" fill="#5059c9" />
        <path d="M10 11h19v10H10z" fill="#5059c9" />
        <path d="M9 11h12v14q-8 3-12-3z" fill="#7b83eb" />
        <path d="M0 6h15v15H0z" fill="#4b53bc" />
        <text x="4" y="18" fill="#fff" fontSize="12" fontWeight="700">T</text>
        <circle cx="23" cy="22" r="7" fill="#fff" />
        <circle cx="23" cy="20" r="2" fill="none" stroke="#555" />
        <path d="M20 24h6q0 3-3 3t-3-3z" fill="none" stroke="#555" />
      </svg>
    ),
  },
];

const TaskbarRow = () => (
  <Taskbar>
    {apps.map((app) => (
      <TaskButton key={app.name} aria-label={app.name} $width={app.width} $open={app.open} $active={app.active}>
        {app.icon}
      </TaskButton>
    ))}
    <Tray>
      <svg width="17" height="10" fill="none" stroke="#fff" strokeWidth="1.500"><path d="M1 9l7.500-8L16 9" /></svg>
      <svg width="20" height="12" fill="none" stroke="#fff">
        <path d="M.5.5h17v10H.5zM18.500 4v4" />
        <path d="M2 2h4v7H2z" fill="#fff" stroke="none" />
      </svg>
      <svg width="17" height="17" fill="none" stroke="#ccc">
        <path d="M1 16A15 15 0 0 1 16 1M5 16A11 11 0 0 1 16 5M9 16a7 7 0 0 1 7-7M12 16a4 4 0 0 1 4-4" />
        <circle cx="15" cy="15" r="1.500" fill="#fff" />
      </svg>
      <svg width="21" height="18" fill="none" stroke="#fff">
        <path d="M.5 6.500H3L7.500 2v14L3 11.500H.5zM10 6q2 3 0 6M13 4q4 5 0 10M16 1q6 8 0 16" />
      </svg>
      <Language>ع</Language>
      <Clock>
        2:54 PM
        <br />
        6/30/2025
      </Clock>
      <Notifications aria-label="Notifications">
        <svg width="21" height="20" fill="none">
          <path d="M0 0h20v17h-7l-3 3v-3H0z" fill="#fff" />
          <path d="M4 4.500h12M4 8.500h12M4 12.500h7" stroke="#222" />
          <path d="M17 9q1 6-5 7 2 3 5 2 4-2 3-6-1-2-3-3z" fill="#fff" stroke="#222" />
        </svg>
      </Notifications>
    </Tray>
  </Taskbar>
);

export default function App() {
  return (
    <Window>
      <GlobalStyle />
      <TitleBar />
      <RibbonBar />
      <DocumentArea />
      <Status />
      <TaskbarRow />
      <Watermark>خمسات</Watermark>
    </Window>
  );
}
